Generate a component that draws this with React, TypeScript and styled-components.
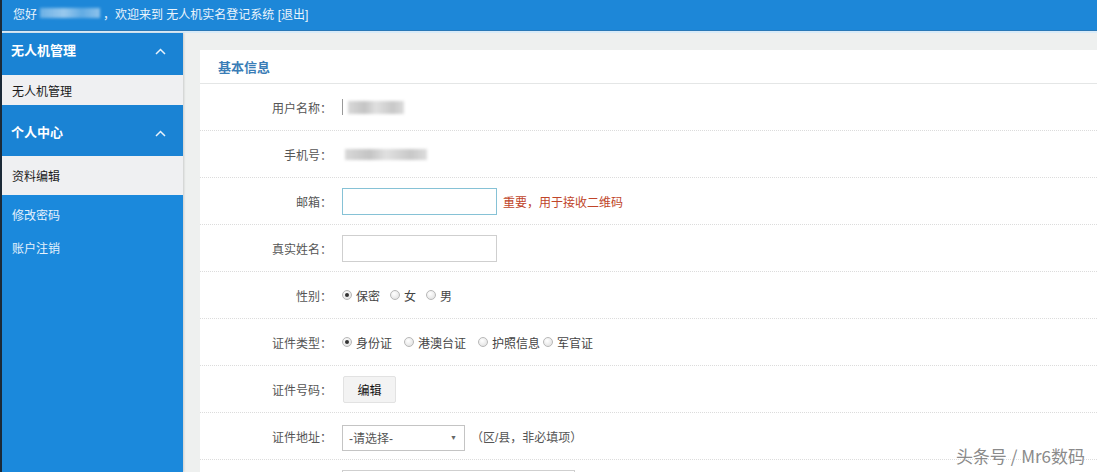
import React from "react";
import styled, { createGlobalStyle } from "styled-components";

const GlobalStyle = createGlobalStyle`
  html, body {
    margin: 0;
    padding: 0;
    height: 100%;
    overflow: hidden;
    background: #eef0f0;
  }
  body {
    font-family: "Liberation Sans", "Noto Sans CJK SC", sans-serif;
    font-size: 12px;
    color: #555;
  }
`;

const sideMenus = [
  { title: "无人机管理", h: 42, pt: 9, items: [{ name: "无人机管理", h: 30 }] },
  { title: "个人中心", h: 51, pt: 19, items: [{ name: "资料编辑", h: 39 }] },
];

const links = ["修改密码", "账户注销"];

function App() {
  return (
    <Page>
      <GlobalStyle />
      <TopBar>
        您好
        <Blur $w={60} $h={10} $light />
        ，欢迎来到 无人机实名登记系统 [退出]
      </TopBar>

      <Body>
        <Sidebar>
          {sideMenus.map((m) => (
            <div key={m.title}>
              <MenuHead $h={m.h} $pt={m.pt}>
                <span>{m.title}</span>
                <svg width="11" height="7" viewBox="0 0 11 7">
                  <path d="M1 6 L5.5 1.5 L10 6" fill="none" stroke="#e8f2fb" strokeWidth="1.5" />
                </svg>
              </MenuHead>
              {m.items.map((i) => (
                <MenuItem key={i.name} $h={i.h}>
                  {i.name}
                </MenuItem>
              ))}
            </div>
          ))}
          <LinkList>
            {links.map((l) => (
              <SideLink key={l}>{l}</SideLink>
            ))}
          </LinkList>
        </Sidebar>

        <Main>
          <Panel>
            <PanelHead>基本信息</PanelHead>

            <Row>
              <Label>用户名称：</Label>
              <Value>
                <Bar />
                <Blur $w={56} $h={13} />
              </Value>
            </Row>

            <Row>
              <Label>手机号：</Label>
              <Value>
                <Blur $w={82} $h={11} />
              </Value>
            </Row>

            <Row>
              <Label>邮箱：</Label>
              <Value>
                <Input $focus />
                <Warn>重要，用于接收二维码</Warn>
              </Value>
            </Row>

            <Row>
              <Label>真实姓名：</Label>
              <Value>
                <Input />
              </Value>
            </Row>

            <Row>
              <Label>性别：</Label>
              <Value>
                <Option $gap={10}>
                  <Radio $checked />
                  保密
                </Option>
                <Option $gap={10}>
                  <Radio />女
                </Option>
                <Option $gap={10}>
                  <Radio />男
                </Option>
              </Value>
            </Row>

            <Row>
              <Label>证件类型：</Label>
              <Value>
                <Option $gap={12}>
                  <Radio $checked />
                  身份证
                </Option>
                <Option $gap={12}>
                  <Radio />
                  港澳台证
                </Option>
                <Option $gap={3}>
                  <Radio />
                  护照信息
                </Option>
                <Option $gap={0}>
                  <Radio />
                  军官证
                </Option>
              </Value>
            </Row>

            <Row>
              <Label>证件号码：</Label>
              <Value>
                <Button>编辑</Button>
              </Value>
            </Row>

            <Row>
              <Label>证件地址：</Label>
              <Value>
                <Select>
                  <span>-请选择-</span>
                  <Caret>▼</Caret>
                </Select>
                <Hint>（区/县，非必填项）</Hint>
              </Value>
            </Row>

            {/* next row, only its input top shows above the fold */}
            <Row $top>
              <Label />
              <Value>
                <Input $w={233} />
              </Value>
            </Row>
          </Panel>
          <Watermark>头条号 / Mr6数码</Watermark>
        </Main>
      </Body>
    </Page>
  );
}

export default App;

const Page = styled.div`
  height: 100vh;
  display: flex;
  flex-direction: column;
  border-left: 2px solid #1b2a38;
`;

const TopBar = styled.div`
  height: 31px;
  flex-shrink: 0;
  display: flex;
  align-items: center;
  padding-left: 11px;
  padding-bottom: 4px;
  box-sizing: border-box;
  background: #1d87d8;
  border-bottom: 1px solid #2a78b6;
  color: #eaf4fc;
  font-size: 12px;
  white-space: pre;
`;

const Blur = styled.span<{ $w: number; $h: number; $light?: boolean }>`
  display: inline-block;
  width: ${(p) => p.$w}px;
  height: ${(p) => p.$h}px;
  margin: 0 3px;
  background: ${(p) =>
    p.$light
      ? "linear-gradient(90deg, rgba(255,255,255,.35), rgba(255,255,255,.55) 40%, rgba(255,255,255,.3) 70%, rgba(255,255,255,.5))"
      : "linear-gradient(90deg, #d8d8d8, #c4c4c4 30%, #e0e0e0 50%, #c8c8c8 80%, #dcdcdc)"};
  filter: blur(1.6px);
`;

const Body = styled.div`
  flex: 1;
  display: flex;
  min-height: 0;
  border-top: 2px solid #d9ebf8;
`;

const Sidebar = styled.div`
  width: 181px;
  flex-shrink: 0;
  background: #1b89dc;
  box-shadow: 1px 0 2px rgba(0, 0, 0, 0.15);
  z-index: 1;
`;

const MenuHead = styled.div<{ $h: number; $pt: number }>`
  height: ${(p) => p.$h}px;
  box-sizing: border-box;
  padding: ${(p) => p.$pt}px 17px 0 9px;
  display: flex;
  align-items: flex-start;
  justify-content: space-between;
  background: #1a83d4;
  color: #fff;
  font-size: 13px;
  font-weight: bold;
  line-height: 18px;

  svg {
    margin-top: 6px;
  }
`;

const MenuItem = styled.div<{ $h: number }>`
  height: ${(p) => p.$h}px;
  display: flex;
  align-items: center;
  padding-left: 10px;
  background: #eff0f2;
  color: #1a1a1a;
  font-size: 12px;
`;

const LinkList = styled.div`
  padding-top: 3px;
`;

const SideLink = styled.div`
  height: 33px;
  display: flex;
  align-items: center;
  padding-left: 10px;
  color: #e6f2fc;
  font-size: 12px;
`;

const Main = styled.div`
  flex: 1;
  position: relative;
  padding: 17px 0 0 17px;
  background: #eef0ef;
  overflow: hidden;
`;

const Panel = styled.div`
  background: #fff;
  height: 100%;
`;

const PanelHead = styled.div`
  height: 33px;
  display: flex;
  align-items: center;
  padding-left: 18px;
  border-bottom: 1px solid #e4e6e6;
  color: #3a7db6;
  font-size: 13px;
  font-weight: bold;
`;

const Row = styled.div<{ $top?: boolean }>`
  height: 46px;
  display: flex;
  align-items: ${(p) => (p.$top ? "flex-start" : "center")};
  padding-top: ${(p) => (p.$top ? "10px" : "0")};
  box-sizing: ${(p) => (p.$top ? "border-box" : "content-box")};
  border-bottom: 1px dotted #dcdcdc;
`;

const Label = styled.div`
  width: 132px;
  flex-shrink: 0;
  text-align: right;
  color: #555;
  font-size: 12px;
`;

const Value = styled.div`
  margin-left: 10px;
  display: flex;
  align-items: center;
  color: #555;
`;

const Bar = styled.span`
  width: 1px;
  height: 16px;
  background: #999;
  margin-right: 2px;
`;

const Input = styled.div<{ $focus?: boolean; $w?: number }>`
  width: ${(p) => p.$w ?? 155}px;
  height: 27px;
  box-sizing: border-box;
  border: 1px solid ${(p) => (p.$focus ? "#86c2d6" : "#cfcfcf")};
  background: #fff;
`;

const Warn = styled.span`
  margin-left: 6px;
  color: #c0452a;
  font-size: 12px;
`;

const Option = styled.label<{ $gap: number }>`
  display: flex;
  align-items: center;
  margin-right: ${(p) => p.$gap}px;
  color: #444;
  font-size: 12px;
`;

const Radio = styled.span<{ $checked?: boolean }>`
  width: 10px;
  height: 10px;
  box-sizing: border-box;
  margin-right: 4px;
  border-radius: 50%;
  border: 1px solid #b8b8b8;
  background: radial-gradient(circle at 40% 35%, #fff, #dcdcdc);
  position: relative;

  &::after {
    content: "";
    display: ${(p) => (p.$checked ? "block" : "none")};
    position: absolute;
    left: 2px;
    top: 2px;
    width: 4px;
    height: 4px;
    border-radius: 50%;
    background: #333;
  }
`;

const Button = styled.div`
  width: 53px;
  height: 27px;
  box-sizing: border-box;
  display: flex;
  align-items: center;
  justify-content: center;
  margin-left: 1px;
  margin-top: 1px;
  background: #f3f3f3;
  border: 1px solid #e2e2e2;
  border-radius: 2px;
  color: #111;
  font-size: 12px;
`;

const Select = styled.div`
  width: 123px;
  height: 26px;
  box-sizing: border-box;
  margin-top: 3px;
  display: flex;
  align-items: center;
  justify-content: space-between;
  padding: 0 7px 0 6px;
  border: 1px solid #c4c4c4;
  color: #555;
  font-size: 12px;
`;

const Caret = styled.span`
  font-size: 7px;
  color: #666;
`;

const Hint = styled.span`
  margin-left: 6px;
  color: #555;
  font-size: 12px;
`;

const Watermark = styled.div`
  position: absolute;
  right: 12px;
  bottom: 4px;
  color: #8a8a8a;
  font-family: "Noto Sans CJK SC", sans-serif;
  font-size: 17px;
  text-shadow: 0 0 2px #fff, 0 0 2px #fff;
`;
